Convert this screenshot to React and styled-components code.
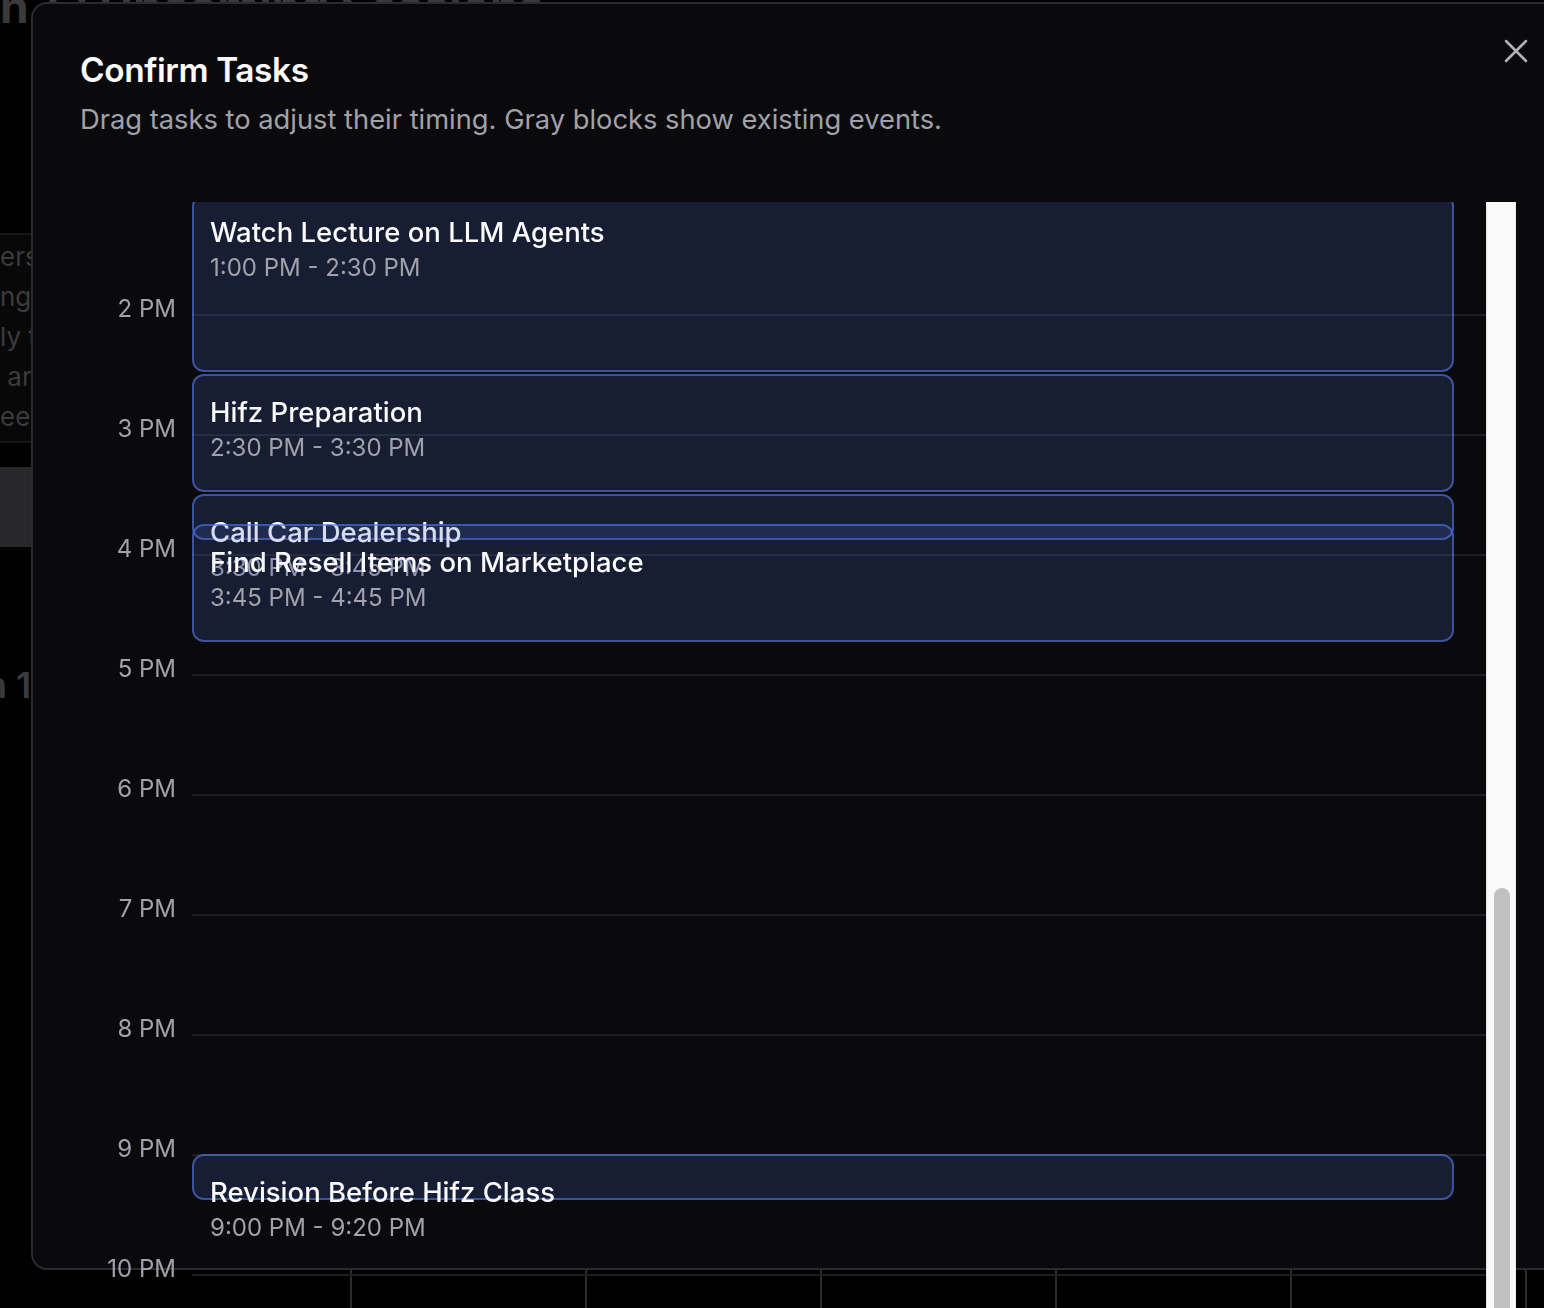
import React, { useLayoutEffect, useRef, useState } from 'react';
import styled, { createGlobalStyle } from 'styled-components';
import { X } from 'lucide-react';

const HOUR = 120;
const SCROLL_TOP = 1568;
const VIEW_H = 1260;

const events = [
    { id: 'llm', title: 'Watch Lecture on LLM Agents', start: 780, end: 870 },
    { id: 'hifz', title: 'Hifz Preparation', start: 870, end: 930 },
    { id: 'car', title: 'Call Car Dealership', start: 930, end: 945 },
    { id: 'resell', title: 'Find Resell Items on Marketplace', start: 945, end: 1005 },
    { id: 'revision', title: 'Revision Before Hifz Class', start: 1260, end: 1280 },
];

const hourLabel = (h) => {
    const suffix = h < 12 ? 'AM' : 'PM';
    const n = h % 12 === 0 ? 12 : h % 12;
    return `${n} ${suffix}`;
};

const timeLabel = (mins) => {
    const h = Math.floor(mins / 60);
    const m = String(mins % 60).padStart(2, '0');
    const suffix = h < 12 ? 'AM' : 'PM';
    const n = h % 12 === 0 ? 12 : h % 12;
    return `${n}:${m} ${suffix}`;
};

export default function App() {
    const scrollRef = useRef(null);
    const [thumb, setThumb] = useState({ top: 686, height: 551 });

    const syncThumb = () => {
        const el = scrollRef.current;
        if (!el) return;
        const view = el.clientHeight;
        const full = el.scrollHeight;
        const height = Math.max((view * view) / full, 40);
        const top = (el.scrollTop / Math.max(full - view, 1)) * (view - height);
        setThumb({ top, height });
    };

    useLayoutEffect(() => {
        if (scrollRef.current) scrollRef.current.scrollTop = SCROLL_TOP;
        syncThumb();
    }, []);

    const hours = Array.from({ length: 24 }, (_, i) => i);

    return (
        <>
            <GlobalStyle />
            <Page>
                <PageHeading>n 12 Upcoming Sessions</PageHeading>
                <Sidebar>
                    <NoteCard>
                        <NoteLine>ers who plan</NoteLine>
                        <NoteLine>ng sessions</NoteLine>
                        <NoteLine>ly to stay</NoteLine>
                        <NoteLine>&nbsp;are ready</NoteLine>
                        <NoteLine>eep focus</NoteLine>
                    </NoteCard>
                    <GhostButton />
                    <BigCount>n 1</BigCount>
                </Sidebar>
                <WeekGrid>
                    {Array.from({ length: 7 }, (_, i) => (
                        <WeekCell key={i} $first={i === 0} />
                    ))}
                </WeekGrid>
            </Page>

            <Dialog>
                <CloseButton aria-label="Close">
                    <X size={40} strokeWidth={1.5} />
                </CloseButton>
                <Title>Confirm Tasks</Title>
                <Description>
                    Drag tasks to adjust their timing. Gray blocks show existing events.
                </Description>

                <ScrollFrame>
                    <Scroller ref={scrollRef} onScroll={syncThumb}>
                        <Timeline>
                            {hours.map((h) => (
                                <HourRow key={h}>
                                    <HourLabel>{hourLabel(h)}</HourLabel>
                                    <HourLine />
                                </HourRow>
                            ))}
                            <EventLayer>
                                {events.map((e) => (
                                    <EventBlock
                                        key={e.id}
                                        style={{
                                            top: e.start * 2,
                                            height: Math.max((e.end - e.start) * 2, 48) - 2,
                                        }}
                                    >
                                        <EventTitle>{e.title}</EventTitle>
                                        <EventTime>
                                            {timeLabel(e.start)} - {timeLabel(e.end)}
                                        </EventTime>
                                    </EventBlock>
                                ))}
                            </EventLayer>
                        </Timeline>
                    </Scroller>
                    <ScrollTrack>
                        <ScrollThumb style={{ top: thumb.top, height: thumb.height }} />
                    </ScrollTrack>
                </ScrollFrame>
            </Dialog>
        </>
    );
}

const GlobalStyle = createGlobalStyle`
    html, body {
        margin: 0;
        padding: 0;
        background: #000;
        overflow: hidden;
    }
    body {
        font-family: Inter, "Noto Sans", "Liberation Sans", sans-serif;
        -webkit-font-smoothing: antialiased;
    }
    * { box-sizing: border-box; }
`;

/* ---------- page behind the dialog ---------- */

const Page = styled.div`
    display: flex;
    flex-direction: column;
    width: 1544px;
    height: 100vh;
    overflow: hidden;
`;

const PageHeading = styled.h1`
    margin: -18px 0 0 0;
    font-size: 46px;
    line-height: 48px;
    font-weight: 700;
    color: #3a3a3c;
    white-space: nowrap;
`;

const Sidebar = styled.div`
    display: flex;
    flex-direction: column;
    width: 320px;
    margin-top: 203px;
`;

const NoteCard = styled.div`
    display: flex;
    flex-direction: column;
    padding: 2px 0 4px;
    background: #080808;
    border-top: 2px solid #161616;
    border-bottom: 2px solid #161616;
`;

const NoteLine = styled.div`
    font-size: 26px;
    line-height: 40px;
    color: #3b3b3d;
    white-space: nowrap;
`;

const GhostButton = styled.div`
    margin-top: 24px;
    height: 80px;
    background: #28282a;
`;

const BigCount = styled.div`
    margin: 114px 0 0 -15px;
    font-size: 36px;
    line-height: 48px;
    font-weight: 600;
    color: #3a3a3c;
`;

const WeekGrid = styled.div`
    display: grid;
    grid-template-columns: 350px repeat(6, 235px);
    margin-top: auto;
    height: 120px;
`;

const WeekCell = styled.div`
    border-left: ${(p) => (p.$first ? 'none' : '2px solid #2c2c2e')};
`;

/* ---------- dialog ---------- */

const Dialog = styled.div`
    position: fixed;
    left: 31px;
    top: 2px;
    width: 1535px;
    height: 1268px;
    padding: 44px 48px 0 47px;
    background: #0a0a0c;
    border: 2px solid #2b2b2f;
    border-radius: 16px;
    display: flex;
    flex-direction: column;
`;

const CloseButton = styled.button`
    position: absolute;
    top: 27px;
    right: 28px;
    width: 40px;
    height: 40px;
    padding: 0;
    border: none;
    background: transparent;
    color: #b4b4b8;
    display: flex;
    align-items: center;
    justify-content: center;
`;

const Title = styled.h2`
    margin: 0;
    font-size: 33.4px;
    line-height: 44px;
    font-weight: 600;
    letter-spacing: -0.4px;
    color: #fafafa;
`;

const Description = styled.p`
    margin: 8px 0 0;
    font-size: 27.3px;
    line-height: 40px;
    color: #a1a1aa;
`;

const ScrollFrame = styled.div`
    display: flex;
    margin-top: 62px;
    height: ${VIEW_H}px;
    flex-shrink: 0;
`;

const Scroller = styled.div`
    flex: 1;
    overflow-y: scroll;
    overflow-x: hidden;
    scrollbar-width: none;

    &::-webkit-scrollbar {
        display: none;
    }
`;

const ScrollTrack = styled.div`
    position: relative;
    width: 30px;
    flex-shrink: 0;
    background: #f9f9f9;
    border-left: 1px solid #e4e4e4;
    border-right: 1px solid #ececec;
`;

const ScrollThumb = styled.div`
    position: absolute;
    left: 7px;
    right: 5px;
    border-radius: 8px;
    background: #c1c1c1;
`;

const Timeline = styled.div`
    position: relative;
    display: flex;
    flex-direction: column;
`;

const HourRow = styled.div`
    display: flex;
    height: ${HOUR}px;
`;

const HourLabel = styled.div`
    width: 112px;
    padding-right: 16px;
    text-align: right;
    font-size: 24px;
    line-height: 32px;
    color: #a1a1aa;
    transform: translateY(-21px);
`;

const HourLine = styled.div`
    flex: 1;
    border-top: 2px solid #1f1f23;
`;

const EventLayer = styled.div`
    position: absolute;
    top: 0;
    bottom: 0;
    left: 112px;
    right: 32px;
`;

const EventBlock = styled.div`
    position: absolute;
    left: 0;
    right: 0;
    padding: 16px;
    border: 2px solid rgba(80, 120, 230, 0.6);
    border-radius: 12px;
    background: rgba(75, 105, 205, 0.2);
    cursor: grab;
`;

const EventTitle = styled.div`
    font-size: 27.5px;
    line-height: 40px;
    font-weight: 500;
    color: #fafafa;
    white-space: nowrap;
`;

const EventTime = styled.div`
    font-size: 24px;
    line-height: 32px;
    color: #a1a1aa;
    white-space: nowrap;
`;
